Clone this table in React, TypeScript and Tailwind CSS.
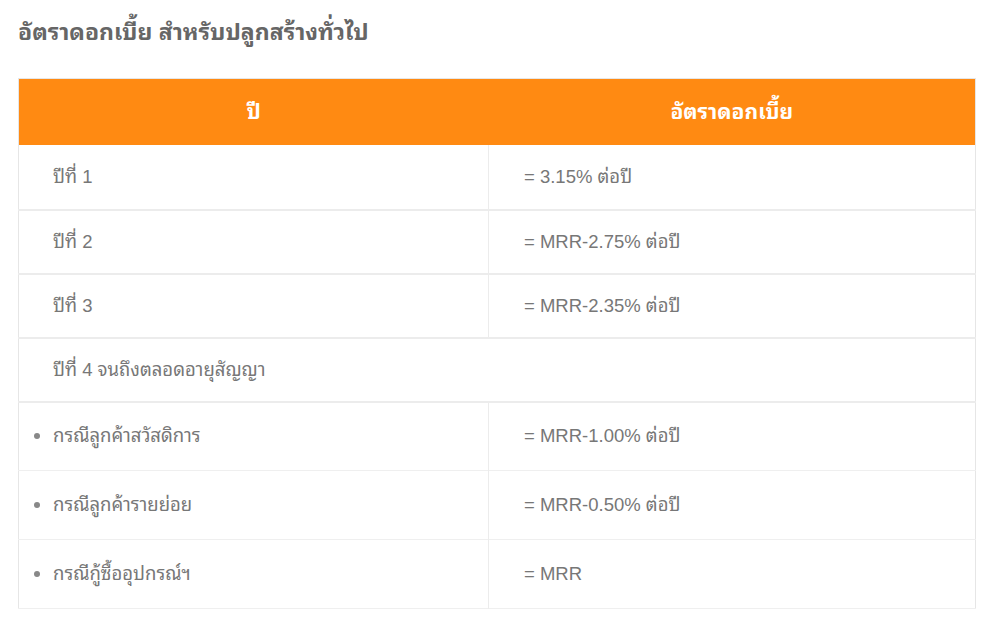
export default function App() {
  const font = {
    fontFamily:
      '"Liberation Sans", Tahoma, "Noto Sans Thai Looped", Loma, Garuda, Norasi, Kinnari, "Noto Sans Thai", "DejaVu Sans", sans-serif',
  };

  return (
    <div className="min-h-screen bg-white px-[18px] pt-[16px] pb-4" style={font}>
      <h2 className="text-[23px] font-bold text-[#666] leading-[32px]">
        อัตราดอกเบี้ย สำหรับปลูกสร้างทั่วไป
      </h2>

      <table className="mt-[30px] w-[958px] border-collapse border border-[#e6e6e6] text-[18.5px] text-[#777]">
        <thead>
          <tr className="h-[66px] bg-[#ff8a12] text-white">
            <th className="w-[470px] font-bold text-[21px] text-center">ปี</th>
            <th className="font-bold text-[21px] text-center">อัตราดอกเบี้ย</th>
          </tr>
        </thead>
        <tbody>
          {/* ปีที่ 1-3 */}
          <tr className="h-[65px] border-b-2 border-[#ececec]">
            <td className="pl-[34px] border-r border-[#ececec]">ปีที่ 1</td>
            <td className="pl-[35px]">= 3.15% ต่อปี</td>
          </tr>
          <tr className="h-[64px] border-b-2 border-[#ececec]">
            <td className="pl-[34px] border-r border-[#ececec]">ปีที่ 2</td>
            <td className="pl-[35px]">= MRR-2.75% ต่อปี</td>
          </tr>
          <tr className="h-[64px] border-b-2 border-[#ececec]">
            <td className="pl-[34px] border-r border-[#ececec]">ปีที่ 3</td>
            <td className="pl-[35px]">= MRR-2.35% ต่อปี</td>
          </tr>

          {/* ปีที่ 4 */}
          <tr className="h-[64px] border-b-2 border-[#ececec]">
            <td colSpan={2} className="pl-[34px]">ปีที่ 4 จนถึงตลอดอายุสัญญา</td>
          </tr>

          {/* กรณีต่างๆ */}
          {[
            ["กรณีลูกค้าสวัสดิการ", "= MRR-1.00% ต่อปี"],
            ["กรณีลูกค้ารายย่อย", "= MRR-0.50% ต่อปี"],
            ["กรณีกู้ซื้ออุปกรณ์ฯ", "= MRR"],
          ].map(([label, rate]) => (
            <tr key={label} className="h-[69px] border-b border-[#efefef]">
              <td className="border-r border-[#ececec]">
                <div className="flex items-center">
                  <span className="ml-[15px] mr-[13px] h-[6px] w-[6px] rounded-full bg-[#888]" />
                  <span>{label}</span>
                </div>
              </td>
              <td className="pl-[35px]">{rate}</td>
            </tr>
          ))}
        </tbody>
      </table>
    </div>
  );
}
